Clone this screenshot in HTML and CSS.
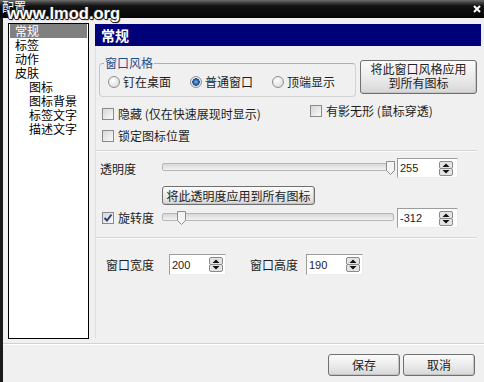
FILE: index.html
```html
<!DOCTYPE html>
<html lang="zh-CN">
<head>
  <meta charset="UTF-8">
  <title>配置</title>
  <link rel="stylesheet" href="styles.css">
</head>
<body>
  <div class="window">
    <div class="titlebar">
      <span class="title">配置</span>
      <svg class="close" width="8" height="8" viewBox="0 0 8 8"><path d="M1 1 L7 7 M7 1 L1 7" stroke="#fff" stroke-width="2"/></svg>
    </div>
    <span class="watermark">www.lmod.org</span>

    <div class="frame">
      <div class="main">
        <ul class="nav">
          <li class="selected">常规</li>
          <li>标签</li>
          <li>动作</li>
          <li>皮肤</li>
          <li class="sub">图标</li>
          <li class="sub">图标背景</li>
          <li class="sub">标签文字</li>
          <li class="sub">描述文字</li>
        </ul>

        <div class="panel">
          <div class="panel-title">常规</div>

          <div class="style-row">
            <fieldset class="group">
              <legend>窗口风格</legend>
              <label class="radio"><span class="radio-mark"></span>钉在桌面</label>
              <label class="radio"><span class="radio-mark on"></span>普通窗口</label>
              <label class="radio"><span class="radio-mark"></span>顶端显示</label>
            </fieldset>
            <button class="btn apply-style">将此窗口风格应用<br>到所有图标</button>
          </div>

          <div class="check-row">
            <label class="check wide"><span class="box"></span>隐藏 (仅在快速展现时显示)</label>
            <label class="check"><span class="box"></span>有影无形 (鼠标穿透)</label>
          </div>
          <div class="check-row second">
            <label class="check"><span class="box"></span>锁定图标位置</label>
          </div>

          <div class="sep"></div>

          <div class="ctl-row opacity">
            <span class="ctl-label">透明度</span>
            <div class="slider">
              <div class="track"></div>
              <svg class="thumb" style="left: 224px" width="9" height="14" viewBox="0 0 9 14"><path d="M0.5 0.5 H8.5 V9.5 L4.5 13.5 L0.5 9.5 Z" fill="#f4f4f4" stroke="#8e8e8e"/></svg>
            </div>
            <div class="spin-input"><span>255</span><svg width="14" height="15" viewBox="0 0 14 15"><rect x="0.5" y="0.5" width="13" height="7" rx="1.5" fill="#e4e4e4" stroke="#8a8a8a"/><rect x="0.5" y="7.5" width="13" height="7" rx="1.5" fill="#e4e4e4" stroke="#8a8a8a"/><path d="M3.5 6 L7 2.5 L10.5 6 Z M3.5 9 H10.5 L7 12.5 Z" fill="#111"/></svg></div>
          </div>

          <button class="btn apply-opacity">将此透明度应用到所有图标</button>

          <div class="ctl-row rotation">
            <label class="check"><span class="box checked"><svg width="10" height="10" viewBox="0 0 10 10"><path d="M1.5 5 L4 7.5 L8.5 1.5" fill="none" stroke="#28407e" stroke-width="2"/></svg></span>旋转度</label>
            <div class="slider">
              <div class="track"></div>
              <svg class="thumb" style="left: 15px" width="9" height="14" viewBox="0 0 9 14"><path d="M0.5 0.5 H8.5 V9.5 L4.5 13.5 L0.5 9.5 Z" fill="#f4f4f4" stroke="#8e8e8e"/></svg>
            </div>
            <div class="spin-input"><span>-312</span><svg width="14" height="15" viewBox="0 0 14 15"><rect x="0.5" y="0.5" width="13" height="7" rx="1.5" fill="#e4e4e4" stroke="#8a8a8a"/><rect x="0.5" y="7.5" width="13" height="7" rx="1.5" fill="#e4e4e4" stroke="#8a8a8a"/><path d="M3.5 6 L7 2.5 L10.5 6 Z M3.5 9 H10.5 L7 12.5 Z" fill="#111"/></svg></div>
          </div>

          <div class="sep"></div>

          <div class="size-row">
            <span class="size-label">窗口宽度</span>
            <div class="spin-input small"><span>200</span><svg width="14" height="15" viewBox="0 0 14 15"><rect x="0.5" y="0.5" width="13" height="7" rx="1.5" fill="#e4e4e4" stroke="#8a8a8a"/><rect x="0.5" y="7.5" width="13" height="7" rx="1.5" fill="#e4e4e4" stroke="#8a8a8a"/><path d="M3.5 6 L7 2.5 L10.5 6 Z M3.5 9 H10.5 L7 12.5 Z" fill="#111"/></svg></div>
            <span class="size-label second">窗口高度</span>
            <div class="spin-input small"><span>190</span><svg width="14" height="15" viewBox="0 0 14 15"><rect x="0.5" y="0.5" width="13" height="7" rx="1.5" fill="#e4e4e4" stroke="#8a8a8a"/><rect x="0.5" y="7.5" width="13" height="7" rx="1.5" fill="#e4e4e4" stroke="#8a8a8a"/><path d="M3.5 6 L7 2.5 L10.5 6 Z M3.5 9 H10.5 L7 12.5 Z" fill="#111"/></svg></div>
          </div>
        </div>
      </div>

      <div class="footer">
        <button class="btn">保存</button>
        <button class="btn">取消</button>
      </div>
    </div>
  </div>
</body>
</html>
```

FILE: styles.css
```css
html, body {
  margin: 0;
  padding: 0;
  width: 484px;
  height: 382px;
  overflow: hidden;
  background: #f0f0f0;
  font-family: "Noto Sans CJK SC", "Noto Sans", sans-serif;
  font-size: 12px;
  color: #1e1e1e;
}
.window {
  position: relative;
  height: 382px;
  display: flex;
  flex-direction: column;
}
.titlebar {
  flex: none;
  height: 18px;
  display: flex;
  justify-content: space-between;
  align-items: flex-start;
  background: linear-gradient(to bottom, #6e6e6e 0, #3a3a3a 3px, #121212 6px, #050505 100%);
}
.title {
  color: #fff;
  line-height: 13px;
  padding-left: 2px;
}
.close {
  margin: 5px 3px 0 0;
}
.watermark {
  position: absolute;
  left: 7px;
  top: 4px;
  font: bold 16.5px/18px "Liberation Sans", sans-serif;
  color: #fff;
  text-shadow: 1px 0 0 #222, -1px 0 0 #222, 0 1px 0 #222, 0 -1px 0 #222, 1px 1px 1px #000;
}
.frame {
  flex: 1;
  border-left: 3px solid #1b1b1b;
  display: flex;
  flex-direction: column;
}
.main {
  height: 325px;
  box-sizing: border-box;
  display: flex;
  align-items: flex-start;
  padding: 5px 0 0 5px;
}

/* left tree */
.nav {
  list-style: none;
  margin: 0;
  padding: 0;
  width: 79px;
  height: 314px;
  border: 1px solid #000;
  background: #fff;
  line-height: 14px;
  color: #000;
}
.nav li {
  height: 14px;
  margin: 0 1px;
  padding-left: 5px;
}
.nav li.sub {
  padding-left: 19px;
}
.nav li.selected {
  background: #808080;
  color: #fff;
}

/* right panel */
.panel {
  flex: 1;
  height: 314px;
  margin: 1px 0 0 6px;
  border-left: 1px solid #e0e0e0;
}
.panel-title {
  height: 22px;
  margin: 0 3px 0 -1px;
  padding-left: 6px;
  background: #000078;
  color: #fff;
  font-size: 14px;
  font-weight: bold;
  line-height: 22px;
}
.style-row {
  display: flex;
  align-items: flex-start;
  margin-top: 11px;
  padding-left: 3px;
}
.group {
  width: 257px;
  height: 40px;
  box-sizing: border-box;
  margin: 0;
  padding: 6px 0 0 8px;
  border: 1px solid;
  border-color: #93b6cf #d2d2d2 #d2d2d2 #bccad4;
  border-radius: 4px;
  display: flex;
  gap: 19px;
}
.group legend {
  margin-left: -4px;
  padding: 0 1px;
  line-height: 12px;
  color: #1f4f8a;
}
.radio {
  display: flex;
  align-items: center;
  gap: 3px;
  height: 14px;
  line-height: 14px;
}
.radio-mark {
  width: 12px;
  height: 12px;
  box-sizing: border-box;
  border-radius: 50%;
  border: 1px solid #8f8f8f;
  background: radial-gradient(circle at 40% 35%, #fff, #d4d4d4);
}
.radio-mark.on {
  background: radial-gradient(circle at 50% 50%, #7ab8ea 0, #2563a8 2.5px, #1d4f8a 3.5px, transparent 4px),
              radial-gradient(circle at 40% 35%, #fff, #d4d4d4);
}
.btn {
  font-family: inherit;
  font-size: 12px;
  line-height: 14px;
  color: #222;
  padding: 0;
  border: 1px solid #707070;
  border-radius: 3px;
  background: linear-gradient(to bottom, #fbfbfb, #e8e8e8 60%, #d6d6d6);
  box-shadow: inset -1px -1px 0 #c4c4c4;
}
.apply-style {
  width: 117px;
  height: 34px;
  margin: 3px 0 0 4px;
  padding-bottom: 2px;
}
.check-row {
  display: flex;
  align-items: flex-start;
  margin-top: 7px;
  padding-left: 6px;
}
.check-row.second {
  margin-top: 8px;
}
.check {
  display: flex;
  align-items: center;
  gap: 4px;
  height: 14px;
  line-height: 14px;
}
.check.wide {
  width: 208px;
  margin-top: 3px;
}
.box {
  width: 12px;
  height: 12px;
  box-sizing: border-box;
  border: 1px solid #8a8a8a;
  background: linear-gradient(135deg, #d6d6d6, #fafafa);
  display: flex;
  align-items: center;
  justify-content: center;
}
.sep {
  margin: 7px 7px 0 0;
  border-top: 1px solid #d6d6d6;
  border-bottom: 1px solid #fbfbfb;
}
.ctl-row {
  display: flex;
  align-items: center;
  height: 20px;
  margin-top: 6px;
  padding-left: 4px;
}
.ctl-label {
  width: 62px;
}
.ctl-row .check {
  width: 60px;
  margin-left: 2px;
}
.ctl-row.rotation {
  margin-top: 3px;
}
.slider {
  position: relative;
  width: 232px;
  height: 20px;
}
.track {
  margin-top: 5px;
  height: 8px;
  box-sizing: border-box;
  border: 1px solid #b6b6b6;
  border-radius: 2px;
  background: linear-gradient(to bottom, #d8d8d8, #f2f2f2);
}
.thumb {
  position: absolute;
  top: 3px;
}
.spin-input {
  width: 61px;
  height: 20px;
  box-sizing: border-box;
  margin-left: 3px;
  padding: 0 4px 0 2px;
  display: flex;
  align-items: center;
  justify-content: space-between;
  border: 1px solid;
  border-color: #9c9c9c #ececec #ececec #9c9c9c;
  background: #fff;
  font: 11px/14px "Liberation Sans", sans-serif;
  color: #222;
}
.apply-opacity {
  display: block;
  width: 153px;
  height: 19px;
  margin: 8px 0 0 66px;
}
.ctl-row.rotation + .sep {
  margin-top: 9px;
}
.size-row {
  display: flex;
  align-items: center;
  margin-top: 15px;
  padding-left: 10px;
}
.size-label {
  width: 63px;
}
.size-label.second {
  width: 56px;
  margin-left: 24px;
}
.spin-input.small {
  width: 57px;
  height: 21px;
  margin-left: 0;
  padding-right: 2px;
}

/* bottom buttons */
.footer {
  flex: 1;
  display: flex;
  justify-content: flex-end;
  align-items: flex-start;
  gap: 3px;
  padding: 10px 9px 0 0;
  border-top: 1px solid #d2d2d2;
  box-shadow: inset 0 1px 0 #fff;
}
.footer .btn {
  width: 72px;
  height: 22px;
}
```
